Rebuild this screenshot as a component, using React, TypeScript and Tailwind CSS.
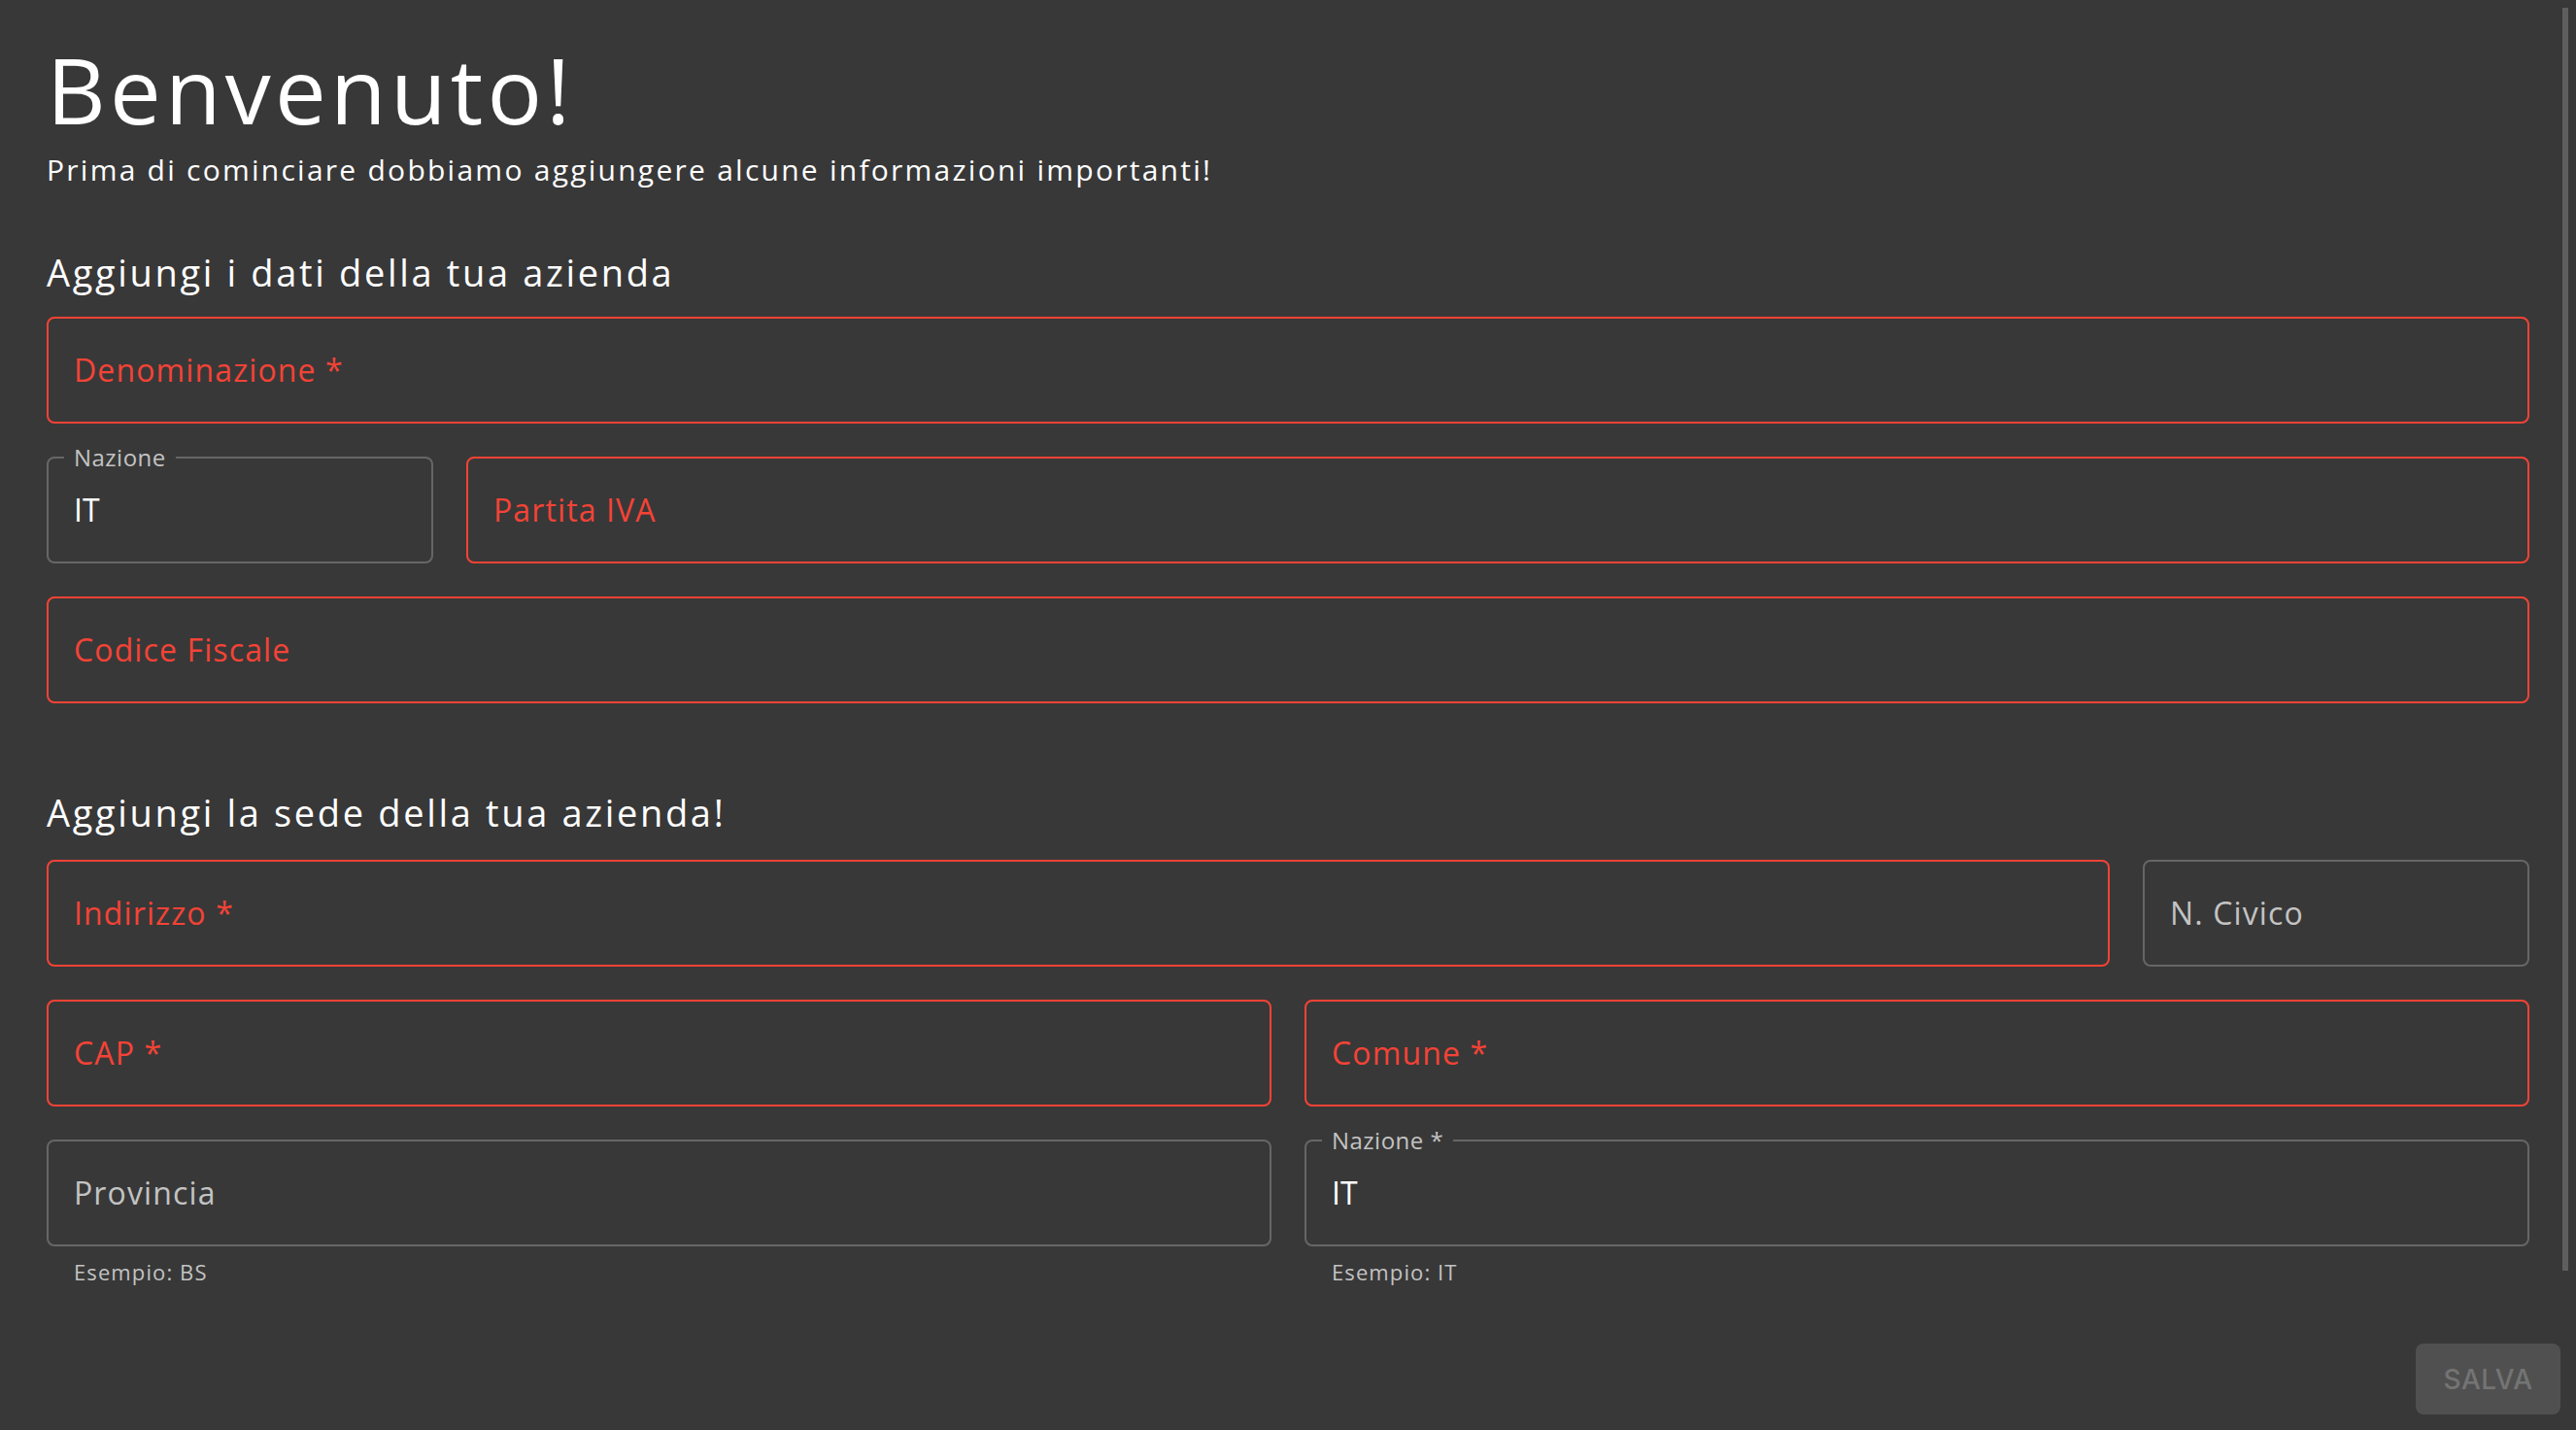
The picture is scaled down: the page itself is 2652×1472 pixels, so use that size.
import { ReactNode } from "react";

type FieldProps = {
  placeholder?: string;
  value?: string;
  label?: string;
  helper?: string;
  error?: boolean;
  className?: string;
};

function Field({ placeholder, value, label, helper, error, className = "" }: FieldProps) {
  return (
    <div className={`flex flex-col ${className}`}>
      <div
        className={`relative flex h-[110px] items-center rounded-[8px] border-2 px-[26px] ${
          error ? "border-[#f44336]" : "border-[#666666]"
        }`}
      >
        {/* floating label sits on the border, like a notched outline */}
        {label && (
          <span className="absolute left-[16px] top-[-16px] bg-[#383838] px-[10px] text-[24px] leading-[30px] tracking-[0.02em] text-[#c3c3c3]">
            {label}
          </span>
        )}
        {value ? (
          <span className="text-[32px] leading-none text-white">{value}</span>
        ) : (
          <span
            className={`mt-[-1px] text-[32px] leading-none tracking-[0.035em] ${
              error ? "text-[#f44336]" : "text-[#c3c3c3]"
            }`}
          >
            {placeholder}
          </span>
        )}
      </div>
      {helper && (
        <span className="mt-[15px] pl-[28px] text-[22px] leading-none tracking-[0.05em] text-[#c3c3c3]">
          {helper}
        </span>
      )}
    </div>
  );
}

function Row({ children }: { children: ReactNode }) {
  return <div className="flex gap-[34px]">{children}</div>;
}

export default function App() {
  return (
    <div className="relative h-[1472px] overflow-hidden bg-[#383838] font-['Open_Sans',sans-serif] text-white">
      <div className="px-[48px]">
        <h1 className="mt-[45px] text-[94px] font-normal leading-none tracking-[0.045em]">Benvenuto!</h1>
        <p className="mt-[21px] text-[30px] leading-none tracking-[0.075em]">
          Prima di cominciare dobbiamo aggiungere alcune informazioni importanti!
        </p>

        <h2 className="mt-[71px] text-[38px] leading-none tracking-[0.07em]">
          Aggiungi i dati della tua azienda
        </h2>
        <div className="mt-[27px] flex flex-col gap-[34px]">
          <Field placeholder="Denominazione *" error />
          <Row>
            <Field label="Nazione" value="IT" className="w-[398px]" />
            <Field placeholder="Partita IVA" error className="flex-1" />
          </Row>
          <Field placeholder="Codice Fiscale" error />
        </div>

        <h2 className="mt-[93px] text-[38px] leading-none tracking-[0.07em]">
          Aggiungi la sede della tua azienda!
        </h2>
        <div className="mt-[30px] flex flex-col gap-[34px]">
          <Row>
            <Field placeholder="Indirizzo *" error className="flex-1" />
            <Field placeholder="N. Civico" className="w-[398px]" />
          </Row>
          <Row>
            <Field placeholder="CAP *" error className="flex-1" />
            <Field placeholder="Comune *" error className="flex-1" />
          </Row>
          <Row>
            <Field placeholder="Provincia" helper="Esempio: BS" className="flex-1" />
            <Field label="Nazione *" value="IT" helper="Esempio: IT" className="flex-1" />
          </Row>
        </div>
      </div>

      {/* scrollbar thumb */}
      <div className="absolute right-[8px] top-[8px] h-[1300px] w-[6px] bg-[#5e5e5e]" />

      <button className="absolute bottom-[16px] right-[16px] h-[73px] w-[149px] rounded-[8px] bg-[#505050] font-['Inter',sans-serif] text-[28px] font-medium tracking-[0.02em] text-[#747474]">
        SALVA
      </button>
    </div>
  );
}
